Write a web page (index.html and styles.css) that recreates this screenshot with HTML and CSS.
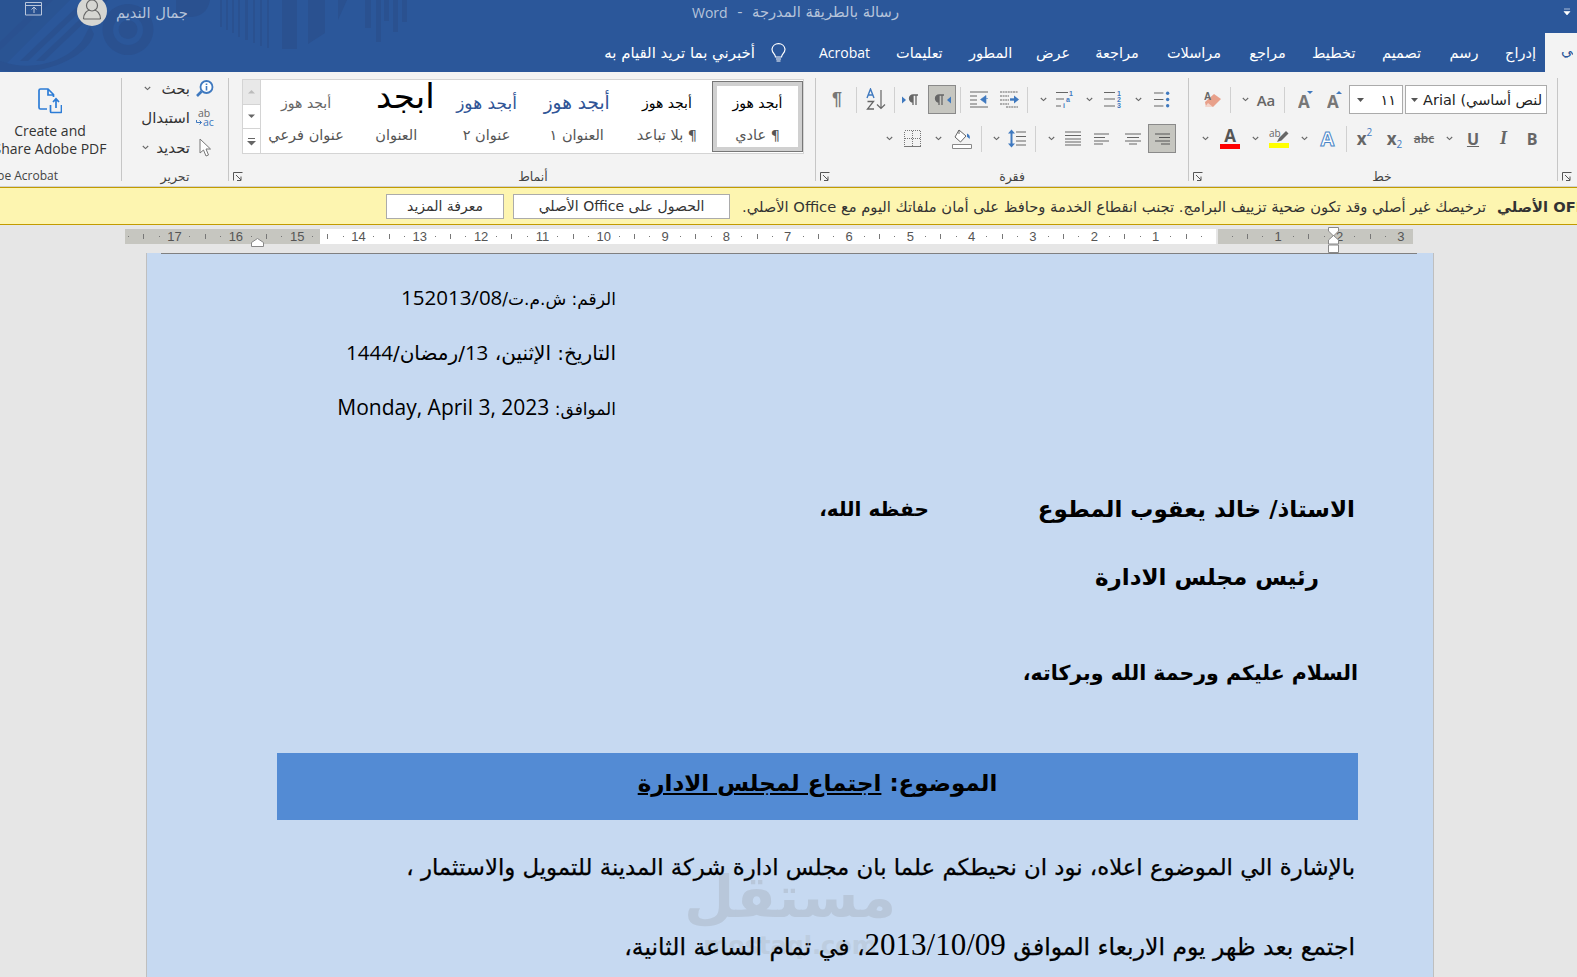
FILE: index.html
```html
<!DOCTYPE html>
<html lang="ar">
<head>
<meta charset="utf-8">
<title>Word</title>
<link rel="stylesheet" href="styles.css">
</head>
<body>
<svg class="defs" width="0" height="0" aria-hidden="true">
  <symbol id="chev" viewBox="0 0 7 5"><path d="M.8 1l2.7 2.600L6.200 1" fill="none" stroke="#666" stroke-width="1.100"/></symbol>
  <symbol id="launch" viewBox="0 0 10 9"><path d="M.5 8.500v-8h9M3 3l5 5M8 4.500v4H4" fill="none" stroke="#555"/></symbol>
</svg>

<div class="app">
  <div class="chrome">
    <svg class="decor" width="420" height="72" viewBox="0 0 420 72" aria-hidden="true">
      <g fill="#2a5190">
        <path d="M0 0h70L0 70z" opacity=".6"/>
        <path d="M20 61L84 0h8L28 61zM36 61L100 0h8L44 61zM0 42L44 0h9L0 50z"/>
        <path d="M0 61c30 11 65 2 82-20l8-15 4 8C88 58 40 78 0 70z"/>
        <path fill-rule="evenodd" d="M128 4a25.500 25.500 0 1 1-.1 0zm0 11a15 15 0 1 0 .1 0z"/>
        <circle cx="128" cy="29.500" r="9.500"/>
        <path d="M176 0h34c-2 12-10 17-20 17h-14z"/>
        <path d="M220 0h2v27h-2zM226 0h2v30h-2zM232 0h2v33h-2zM238 0h2v37h-2zM245 0h3v40h-3zM253 0h2v43h-2zM260 0h2v46h-2zM267 0h2v48h-2zM282 0h15v49h-15zM308 0h17v33l-17 11zM338 0h9l-9 20zM365 0h6v28h-6zM376 0h5v42h-5zM384 0h5v21h-5zM393 0h5v32h-5zM402 0h5v22h-5z"/>
      </g>
    </svg>
    <header class="titlebar">
      <div class="title-left">
        <svg class="ribbon-display" width="18" height="14" viewBox="0 0 18 14" aria-hidden="true"><path d="M.5.500h16v12.500H.5zM.5 3.500h16M9 11V5.500M6.500 7.500L9 5l2.500 2.500" fill="none" stroke="#b9c6db" stroke-width="1"/></svg>
        <div class="avatar"><svg width="30" height="30" viewBox="0 0 30 30" aria-hidden="true"><circle cx="15" cy="9.500" r="5.500" fill="none" stroke="#666" stroke-width="1.200"/><path d="M6.500 23c0-6 4-8.500 6-9M23.500 23c0-6-4-8.500-6-9M6.500 23h17" fill="none" stroke="#666" stroke-width="1.200"/></svg></div>
        <span class="user">جمال النديم</span>
      </div>
      <div class="doc-title"><span dir="ltr">Word</span><span class="dash">-</span><span>رسالة بالطريقة المدرجة</span></div>
      <svg class="qat" width="8" height="8" viewBox="0 0 8 8" aria-hidden="true"><path d="M1 1h6M1 3.500h6L4 7z" fill="#fff" stroke="#fff" stroke-width=".6"/></svg>
    </header>

    <nav class="tabs">
      <span class="tell">أخبرني بما تريد القيام به</span>
      <svg class="bulb" width="17" height="20" viewBox="0 0 17 20" aria-hidden="true"><path d="M5.500 14c0-3-3.500-4-3.500-7.800A6.400 6.400 0 0 1 8.500.7a6.400 6.400 0 0 1 6.500 5.500c0 3.800-3.500 4.800-3.500 7.800zM6 16h5M6.500 18h4" fill="none" stroke="#fff" stroke-width="1.200"/></svg>
      <span class="tab t-acrobat">Acrobat</span>
      <span class="tab t-help">تعليمات</span>
      <span class="tab t-dev">المطور</span>
      <span class="tab t-view">عرض</span>
      <span class="tab t-review">مراجعة</span>
      <span class="tab t-mail">مراسلات</span>
      <span class="tab t-ref">مراجع</span>
      <span class="tab t-layout">تخطيط</span>
      <span class="tab t-design">تصميم</span>
      <span class="tab t-draw">رسم</span>
      <span class="tab t-insert">إدراج</span>
      <span class="tab-active"><span>الرئيسي</span></span>
    </nav>
  </div>

  <section class="ribbon">
    <div class="group g-adobe">
      <div class="adobe-btn">
        <svg width="24" height="26" viewBox="0 0 24 26" aria-hidden="true"><path d="M9 21H2.500A1.500 1.500 0 0 1 1 19.500v-17A1.500 1.500 0 0 1 2.500 1H10l5.500 5.500V9M10 1v6h6M18 20v-9M15 14l3-3.200 3 3.200M12.500 17v6.500a1 1 0 0 0 1 1h9a1 1 0 0 0 1-1V17" fill="none" stroke="#2c7cd6" stroke-width="1.700"/></svg>
        <span class="adobe-text">Create and</span>
        <span class="adobe-text">Share Adobe PDF</span>
      </div>
      <div class="glabel g-adobe-label">Adobe Acrobat</div>
    </div>

    <div class="group g-edit">
      <div class="edit-rows">
        <div class="edit-row r1">
          <svg class="chev" width="7" height="5"><use href="#chev"/></svg>
          <span class="edit-text">بحث</span>
          <span class="edit-ico"><svg width="18" height="18" viewBox="0 0 18 18" aria-hidden="true"><circle cx="10.500" cy="7" r="6" fill="#fff" stroke="#3f79bf" stroke-width="1.800"/><path d="M5.500 11.500L1 16" stroke="#3f79bf" stroke-width="2.600"/><path d="M10.500 3.500v1.500M10.500 6v4.500" stroke="#3f79bf" stroke-width="1.600"/></svg></span>
        </div>
        <div class="edit-row r2">
          <span class="edit-text">استبدال</span>
          <span class="edit-ico abac"><span class="ab">ab</span><span class="ac"><svg width="7" height="7" viewBox="0 0 7 7" aria-hidden="true"><path d="M.5 1v2.500h5M3.500 1.500l2 2-2 2" fill="none" stroke="#3f79bf"/></svg>ac</span></span>
        </div>
        <div class="edit-row r3">
          <svg class="chev" width="7" height="5"><use href="#chev"/></svg>
          <span class="edit-text">تحديد</span>
          <span class="edit-ico"><svg width="12" height="19" viewBox="0 0 12 19" aria-hidden="true"><path d="M1 1v14l3.500-3 2.500 6 2.500-1-2.500-6h4.500z" fill="#fff" stroke="#777"/></svg></span>
        </div>
      </div>
      <div class="glabel">تحرير</div>
    </div>

    <div class="group g-styles">
      <div class="gallery">
        <div class="gal-scroll">
          <div class="gs gs-up"><svg width="7" height="5" viewBox="0 0 7 5"><path d="M0 4.500h7L3.500 1z" fill="#bbb"/></svg></div>
          <div class="gs"><svg width="7" height="5" viewBox="0 0 7 5"><path d="M0 .5h7L3.500 4z" fill="#666"/></svg></div>
          <div class="gs"><svg width="9" height="9" viewBox="0 0 9 9"><path d="M1 1.500h7" stroke="#666"/><path d="M0 4h9L4.500 8.500z" fill="#666"/></svg></div>
        </div>
        <div class="style-item"><span class="sp sp-sub">أبجد هوز</span><span class="sl">عنوان فرعي</span></div>
        <div class="style-item"><span class="sp sp-title">ابجد</span><span class="sl">العنوان</span></div>
        <div class="style-item"><span class="sp sp-h2">أبجد هوز</span><span class="sl">عنوان ٢</span></div>
        <div class="style-item"><span class="sp sp-h1">أبجد هوز</span><span class="sl">العنوان ١</span></div>
        <div class="style-item"><span class="sp">أبجد هوز</span><span class="sl">¶ بلا تباعد</span></div>
        <div class="style-item selected"><span class="sp">أبجد هوز</span><span class="sl">¶ عادي</span></div>
      </div>
      <div class="glabel">أنماط</div>
      <svg class="launcher" width="10" height="9"><use href="#launch"/></svg>
    </div>

    <div class="group g-para">
      <div class="tool-rows">
        <div class="tool-row pr1">
          <span class="slot w24"><span class="pil big">¶</span></span>
          <span class="slot w14"><i class="vsep"></i></span>
          <span class="slot w26"><svg width="20" height="23" viewBox="0 0 20 23" aria-hidden="true"><path d="M1 10L4.500 1 8 10M2.300 7h4.400" fill="none" stroke="#3f79bf" stroke-width="1.400"/><path d="M1.500 13.500h6L1.500 21h6.500" fill="none" stroke="#666" stroke-width="1.300"/><path d="M15 2v18M11 16.500l4 4 4-4" fill="none" stroke="#666" stroke-width="1.200"/></svg></span>
          <span class="slot w10"><i class="vsep"></i></span>
          <span class="slot w24"><svg width="18" height="12" viewBox="0 0 18 12" aria-hidden="true"><path d="M0 2.500l4 3.500-4 3.500z" fill="#3f79bf"/><path d="M11 11V1h5M14 1v10M11 1a3.500 3.500 0 0 0 0 7" fill="none" stroke="#666" stroke-width="1.300"/><path d="M11 1a3.500 3.500 0 0 0 0 7z" fill="#666"/></svg></span>
          <span class="slot w5"></span>
          <span class="slot w28 on"><svg width="20" height="12" viewBox="0 0 20 12" aria-hidden="true"><path d="M7 11V1h5M10 1v10M7 1a3.500 3.500 0 0 0 0 7" fill="none" stroke="#666" stroke-width="1.300"/><path d="M7 1a3.500 3.500 0 0 0 0 7z" fill="#666"/><path d="M19 2.500l-4 3.500 4 3.500z" fill="#3f79bf"/></svg></span>
          <span class="slot w8"><i class="vsep"></i></span>
          <span class="slot w30"><svg width="19" height="17" viewBox="0 0 19 17" aria-hidden="true"><path d="M0 1h18M0 5h7M0 9h7M0 13h7M0 16h18" stroke="#666" stroke-width="1.100"/><path d="M18 7.500h-5M16 4.500l-5.500 4 5.500 4z" fill="#3f79bf" stroke="#3f79bf" stroke-width=".6"/></svg></span>
          <span class="slot w30"><svg width="19" height="17" viewBox="0 0 19 17" aria-hidden="true"><path d="M0 1h18M0 5h9M0 9h9M0 13h9M6 16h12" stroke="#666" stroke-width="1.100" stroke-dasharray="2 .6"/><path d="M10 8.500h4" stroke="#3f79bf" stroke-width="2.400"/><path d="M14 4.500l5 4-5 4z" fill="#3f79bf"/></svg></span>
          <span class="slot w6"><i class="vsep"></i></span>
          <span class="slot w26"><svg width="7" height="5"><use href="#chev"/></svg></span>
          <span class="slot w18"><svg width="18" height="17" viewBox="0 0 18 17" aria-hidden="true"><path d="M0 1.500h12M0 8h8M5 15h-5" stroke="#666" stroke-width="1.100"/><text x="13" y="5" class="mini-b">1</text><text x="10" y="11" class="mini-b">a</text><text x="7" y="17" class="mini-b">i</text></svg></span>
          <span class="slot w30"><svg width="7" height="5"><use href="#chev"/></svg></span>
          <span class="slot w18"><svg width="18" height="17" viewBox="0 0 18 17" aria-hidden="true"><path d="M0 1.500h11M0 8h11M0 15h11" stroke="#666" stroke-width="1.100"/><text x="13" y="5" class="mini-b">1</text><text x="13" y="11" class="mini-b">2</text><text x="13" y="17" class="mini-b">3</text></svg></span>
          <span class="slot w32"><svg width="7" height="5"><use href="#chev"/></svg></span>
          <span class="slot w16"><svg width="17" height="17" viewBox="0 0 17 17" aria-hidden="true"><path d="M0 1.500h10M0 8.500h10M0 15.500h10" stroke="#666" stroke-width="1.100"/><circle cx="14.500" cy="1.800" r="1.800" fill="#3f79bf"/><circle cx="14.500" cy="8.500" r="1.800" fill="#3f79bf"/><circle cx="14.500" cy="15.200" r="1.800" fill="#3f79bf"/></svg></span>
        </div>
        <div class="tool-row pr2">
          <span class="slot w20"><svg width="7" height="5"><use href="#chev"/></svg></span>
          <span class="slot w27"><svg class="crisp" width="17" height="17" viewBox="0 0 17 17" aria-hidden="true"><path d="M.5.500h16v16H.5zM.5 8.500h16M8.500.5v16" fill="none" stroke="#777" stroke-dasharray="1 1"/><path d="M.5 16.500h16" stroke="#777"/></svg></span>
          <span class="slot w24"><svg width="7" height="5"><use href="#chev"/></svg></span>
          <span class="slot w24"><svg width="20" height="20" viewBox="0 0 20 20" aria-hidden="true"><path d="M7 1l7 6-5.500 6L3 8z" fill="#fff" stroke="#666"/><path d="M7 1v4" stroke="#666"/><path d="M15 4.500c2.500 1 3.500 3 2.500 5.500-1-.8-1.500-2-2.500-2z" fill="#3f79bf"/><path d="M.5 15.500h19v4H.5z" fill="#fff" stroke="#888"/></svg></span>
          <span class="slot w14"><i class="vsep"></i></span>
          <span class="slot w16"><svg width="7" height="5"><use href="#chev"/></svg></span>
          <span class="slot w25"><svg width="18" height="19" viewBox="0 0 18 19" aria-hidden="true"><path d="M3.500 3v13" stroke="#3f79bf" stroke-width="2"/><path d="M0 4.500L3.500.5 7 4.500zM0 14.500l3.500 4 3.500-4z" fill="#3f79bf"/><path d="M8 3h10M8 7.500h10M8 12h10M8 16h10" stroke="#666" stroke-width="1.200"/></svg></span>
          <span class="slot w12"><i class="vsep"></i></span>
          <span class="slot w20"><svg width="7" height="5"><use href="#chev"/></svg></span>
          <span class="slot w23"><svg width="16" height="15" viewBox="0 0 16 15" aria-hidden="true"><path d="M0 1h16M0 4.500h16M0 8h16M0 11h16M0 14h16" stroke="#666" stroke-width="1.100"/></svg></span>
          <span class="slot w34"><svg width="15" height="12" viewBox="0 0 15 12" aria-hidden="true"><path d="M0 1h15M0 4.500h11M0 8h15M0 11h9" stroke="#666" stroke-width="1.100"/></svg></span>
          <span class="slot w30"><svg width="16" height="12" viewBox="0 0 16 12" aria-hidden="true"><path d="M0 1h16M2 4.500h12M0 8h16M4 11h8" stroke="#666" stroke-width="1.100"/></svg></span>
          <span class="slot w28 on"><svg width="15" height="12" viewBox="0 0 15 12" aria-hidden="true"><path d="M0 1h15M4 4.500h11M0 8h15M6 11h9" stroke="#555" stroke-width="1.100"/></svg></span>
        </div>
      </div>
      <div class="glabel">فقرة</div>
      <svg class="launcher" width="10" height="9"><use href="#launch"/></svg>
    </div>

    <div class="group g-font">
      <div class="tool-rows">
        <div class="tool-row fr1">
          <span class="slot w25"><svg width="18" height="19" viewBox="0 0 18 19" aria-hidden="true"><path d="M2 17l-1-5 9-8 7 5-8 8z" fill="#e8a08a"/><path d="M1 17l3-4 5 4z" fill="#f4d5cb"/><text x="0" y="10" class="mini-a">A</text></svg></span>
          <span class="slot w10"><i class="vsep"></i></span>
          <span class="slot w20"><svg width="7" height="5"><use href="#chev"/></svg></span>
          <span class="slot w22 aa">Aa</span>
          <span class="slot w14"><i class="vsep"></i></span>
          <span class="slot w28"><svg width="15" height="19" viewBox="0 0 15 19" aria-hidden="true"><text x="0" y="18" class="grow">A</text><path d="M9 1h6l-3 3z" fill="#3f79bf"/></svg></span>
          <span class="slot w30"><svg width="15" height="19" viewBox="0 0 15 19" aria-hidden="true"><text x="0" y="18" class="grow">A</text><path d="M9 4h6l-3-3z" fill="#3f79bf"/></svg></span>
          <span class="combo c-size"><svg class="caret" width="7" height="4" viewBox="0 0 7 4"><path d="M0 0h7L3.500 4z" fill="#555"/></svg><span class="combo-text">١١</span></span>
          <span class="combo c-font"><svg class="caret" width="7" height="4" viewBox="0 0 7 4"><path d="M0 0h7L3.500 4z" fill="#555"/></svg><span class="combo-text" dir="rtl">لنص أساسي) Arial</span></span>
        </div>
        <div class="tool-row fr2">
          <span class="slot w21"><svg width="7" height="5"><use href="#chev"/></svg></span>
          <span class="slot w28 colora"><span class="ca">A</span><i class="cb red"></i></span>
          <span class="slot w22"><svg width="7" height="5"><use href="#chev"/></svg></span>
          <span class="slot w26 colora"><svg width="20" height="14" viewBox="0 0 20 14" aria-hidden="true"><text x="0" y="8" class="mini-ab">ab</text><path d="M8 13l2-4 7-7 2.500 2.500-7 7z" fill="#666"/></svg><i class="cb yellow"></i></span>
          <span class="slot w24"><svg width="7" height="5"><use href="#chev"/></svg></span>
          <span class="slot w23"><span class="fx">A</span></span>
          <span class="slot w14"><i class="vsep"></i></span>
          <span class="slot w23 fmt"><b>x</b><sup>2</sup></span>
          <span class="slot w37 fmt"><b>x</b><sub>2</sub></span>
          <span class="slot w22 abc">abc</span>
          <span class="slot w28"><svg width="7" height="5"><use href="#chev"/></svg></span>
          <span class="slot w20 bt u">U</span>
          <span class="slot w41 bt it">I</span>
          <span class="slot w16 bt">B</span>
        </div>
      </div>
      <div class="glabel">خط</div>
      <svg class="launcher" width="10" height="9"><use href="#launch"/></svg>
    </div>

    <div class="group g-next"><svg class="launcher" width="10" height="9"><use href="#launch"/></svg></div>
  </section>

  <section class="msgbar">
    <button class="msg-btn b-more" dir="rtl">معرفة المزيد</button>
    <button class="msg-btn b-get" dir="rtl">الحصول على Office الأصلي</button>
    <span class="msg-text">ترخيصك غير أصلي وقد تكون ضحية تزييف البرامج. تجنب انقطاع الخدمة وحافظ على أمان ملفاتك اليوم مع Office الأصلي.</span>
    <b class="msg-head" dir="rtl">OFFICE الأصلي</b>
  </section>

  <div class="ruler-zone">
    <div class="ruler">
      <div class="rc"><i class="dot"></i><i class="tick"></i><i class="dot"></i><span>17</span></div>
      <div class="rc"><i class="dot"></i><i class="tick"></i><i class="dot"></i><span>16</span></div>
      <div class="rc"><i class="dot"></i><i class="tick"></i><i class="dot"></i><span>15</span></div>
      <div class="rc"><i class="dot"></i><i class="tick"></i><i class="dot"></i><span>14</span></div>
      <div class="rc"><i class="dot"></i><i class="tick"></i><i class="dot"></i><span>13</span></div>
      <div class="rc"><i class="dot"></i><i class="tick"></i><i class="dot"></i><span>12</span></div>
      <div class="rc"><i class="dot"></i><i class="tick"></i><i class="dot"></i><span>11</span></div>
      <div class="rc"><i class="dot"></i><i class="tick"></i><i class="dot"></i><span>10</span></div>
      <div class="rc"><i class="dot"></i><i class="tick"></i><i class="dot"></i><span>9</span></div>
      <div class="rc"><i class="dot"></i><i class="tick"></i><i class="dot"></i><span>8</span></div>
      <div class="rc"><i class="dot"></i><i class="tick"></i><i class="dot"></i><span>7</span></div>
      <div class="rc"><i class="dot"></i><i class="tick"></i><i class="dot"></i><span>6</span></div>
      <div class="rc"><i class="dot"></i><i class="tick"></i><i class="dot"></i><span>5</span></div>
      <div class="rc"><i class="dot"></i><i class="tick"></i><i class="dot"></i><span>4</span></div>
      <div class="rc"><i class="dot"></i><i class="tick"></i><i class="dot"></i><span>3</span></div>
      <div class="rc"><i class="dot"></i><i class="tick"></i><i class="dot"></i><span>2</span></div>
      <div class="rc"><i class="dot"></i><i class="tick"></i><i class="dot"></i><span>1</span></div>
      <div class="rc"><i class="dot"></i><i class="tick"></i><i class="dot"></i><span></span></div>
      <div class="rc"><i class="dot"></i><i class="tick"></i><i class="dot"></i><span>1</span></div>
      <div class="rc"><i class="dot"></i><i class="tick"></i><i class="dot"></i><span>2</span></div>
      <div class="rc"><i class="dot"></i><i class="tick"></i><i class="dot"></i><span>3</span></div>
    </div>
    <svg class="marker-left" width="13" height="9" viewBox="0 0 13 9" aria-hidden="true"><path d="M.5 8.500V4.500l6-4 6 4v4z" fill="#fff" stroke="#888"/></svg>
    <svg class="marker-right" width="11" height="27" viewBox="0 0 11 27" aria-hidden="true"><path d="M.5.500h10v3.500l-5 5-5-5zM.5 17V13l5-4.500 5 4.500v4zM.5 18h10v7.500H.5z" fill="#fff" stroke="#888"/></svg>
  </div>

  <main class="workspace">
    <article class="page">
      <div class="page-rule"></div>
      <div class="meta">
        <p class="meta-line">الرقم: ش.م.ت/<span>152013/08</span></p>
        <p class="meta-line meta-wide">التاريخ: الإثنين، <span>13</span>/رمضان/<span>1444</span></p>
        <p class="meta-line">الموافق: <span class="meta-date" dir="ltr">Monday, April 3, 2023</span></p>
      </div>
      <p class="addr addr1"><span>الاستاذ/ خالد يعقوب المطوع</span><span class="hafiz">حفظه الله،</span></p>
      <p class="addr addr2">رئيس مجلس الادارة</p>
      <p class="salam">السلام عليكم ورحمة الله وبركاته،</p>
      <div class="subject"><span>الموضوع: <u>اجتماع لمجلس الادارة</u></span></div>
      <p class="body-line l1">بالإشارة الي الموضوع اعلاه، نود ان نحيطكم علما بان مجلس ادارة شركة المدينة للتمويل والاستثمار ،</p>
      <p class="body-line l2">اجتمع بعد ظهر يوم الاربعاء الموافق <span class="tnum">2013/10/09</span>، في تمام الساعة الثانية،</p>
      <div class="watermark"><span class="wm-ar">مستقل</span><span class="wm-en">mostaql.com</span></div>
    </article>
  </main>
</div>
</body>
</html>
```

FILE: styles.css
```css
* { box-sizing: border-box; }
html, body { margin: 0; height: 100%; overflow: hidden; }
body { font-family: "DejaVu Sans", "Open Sans", sans-serif; background: #e6e6e6; color: #333; }
p { margin: 0; }
.defs { position: absolute; }
.crisp { shape-rendering: crispEdges; }
.app { width: 1577px; height: 977px; overflow: hidden; display: flex; flex-direction: column; }

/* window chrome: title bar + tab strip share one backdrop */
.chrome { position: relative; flex: none; background: #2b579a; }
.decor { position: absolute; left: 0; top: 0; }
.titlebar { position: relative; height: 33px; display: flex; align-items: flex-start; }
.title-left { display: flex; align-items: flex-start; padding-left: 25px; }
.ribbon-display { margin-top: 2px; }
.avatar { width: 30px; height: 30px; margin: -4px 0 0 34px; border-radius: 50%; background: #d6d6d2; overflow: hidden; flex: none; }
.user { margin: 4px 0 0 9px; font-size: 14.700px; color: #b6c4da; white-space: nowrap; }
.doc-title { position: absolute; left: 692px; top: 3px; width: 207px; display: flex; justify-content: space-between; font-size: 14.700px; color: #b6c4da; white-space: nowrap; }
.doc-title span:first-child { font-family: "Open Sans", sans-serif; font-size: 14px; }
.qat { position: absolute; right: 6px; top: 8px; }

/* tabs */
.tabs { position: relative; height: 39px; display: flex; align-items: center; padding-left: 605px; color: #fff; font-size: 14.500px; white-space: nowrap; }
.tell { width: 150px; flex: none; font-size: 15px; direction: rtl; }
.bulb { flex: none; margin-left: 15px; margin-right: 32px; }
.tab { text-align: center; flex: none; }
.t-acrobat { width: 50px; font-family: "Open Sans", sans-serif; font-size: 14px; margin-right: 27px; }
.t-help { width: 46px; margin-right: 27px; }
.t-dev { width: 39px; margin-right: 28px; }
.t-view { width: 32px; margin-right: 27px; }
.t-review { width: 44px; margin-right: 27px; }
.t-mail { width: 56px; margin-right: 27px; }
.t-ref { width: 37px; margin-right: 26px; }
.t-layout { width: 42px; margin-right: 27px; }
.t-design { width: 41px; margin-right: 27px; }
.t-draw { width: 30px; margin-right: 26px; }
.t-insert { width: 31px; margin-right: 9px; }
.tab-active { align-self: stretch; width: 32px; flex: none; background: #f3f3f3; color: #2b579a; padding-left: 16px; padding-top: 9px; overflow: hidden; }
.tab-active span { display: block; width: 12px; overflow: hidden; }

/* ribbon */
.ribbon { height: 115px; flex: none; background: #f3f3f3; border-bottom: 1px solid #d0d0d0; display: flex; font-size: 12px; }
.group { position: relative; flex: none; height: 103px; margin-top: 6px; border-right: 1px solid #c6c6c6; display: flex; flex-direction: column; }
.glabel { position: absolute; left: 0; right: 0; top: 91px; text-align: center; font-size: 12.500px; color: #444; white-space: nowrap; }
.launcher { position: absolute; left: 4px; top: 94px; }
.g-adobe { width: 122px; }
.adobe-btn { display: flex; flex-direction: column; align-items: center; padding-top: 10px; width: 112px; margin-left: -6px; }
.adobe-btn svg { margin-bottom: 8px; }
.adobe-text { font-family: "Open Sans", sans-serif; font-size: 14px; line-height: 18px; color: #333; white-space: nowrap; }
.g-adobe-label { left: -60px; right: 63px; text-align: right; font-family: "Open Sans", sans-serif; font-size: 12px; top: 89px; }
.g-edit { width: 107px; }
.edit-rows { display: flex; flex-direction: column; margin-top: -4px; }
.edit-row { height: 29.500px; display: flex; align-items: center; justify-content: flex-end; padding-right: 14px; gap: 6px; }
.edit-text { font-size: 15px; color: #333; white-space: nowrap; }
.edit-ico { width: 18px; flex: none; display: flex; justify-content: center; }
.r1 .chev { margin-right: 4px; }
.r3 .chev { margin-right: 1px; }
.abac { flex-direction: column; font-family: "Open Sans", sans-serif; font-size: 10.500px; line-height: 9px; color: #666; }
.ab { padding-left: 2px; }
.ac { color: #3f79bf; display: flex; align-items: center; }
.g-styles { width: 587px; padding: 1px 0 0 13px; }
.g-styles .glabel { padding-left: 22px; }
.gallery { width: 562px; height: 75px; background: #fff; border: 1px solid #d4d4d4; display: flex; }
.gal-scroll { width: 18px; flex: none; display: flex; flex-direction: column; border-right: 1px solid #d4d4d4; }
.gs { flex: 1; display: flex; align-items: center; justify-content: center; border-bottom: 1px solid #d4d4d4; }
.gs:last-child { border-bottom: 0; }
.gs-up { background: #e8e8e8; }
.style-item { flex: 1; display: flex; flex-direction: column; align-items: center; padding-top: 12px; min-width: 0; white-space: nowrap; }
.style-item .sp { height: 34px; font-size: 14px; line-height: 22px; color: #000; direction: rtl; }
.style-item .sl { font-size: 14.500px; line-height: 18px; color: #555; direction: rtl; }
.style-item .sp-sub { color: #666; }
.style-item .sp-h1 { color: #2f5496; font-size: 18.500px; }
.style-item .sp-h2 { color: #2f5496; font-size: 17px; }
.style-item .sp-title { font-size: 34px; margin: -14px 0 0 18px; height: 48px; line-height: 36px; }
.selected { flex: none; width: 91px; margin: 1px 0; border: 1px solid #777; box-shadow: inset 0 0 0 4px #d0d0d0; padding-top: 10px; }
.g-para { width: 373px; }
.g-para .glabel { padding-left: 20px; }
.g-font { width: 369px; }
.g-font .glabel { padding-left: 18px; }
.g-next { flex: 1; border-right: 0; }
.tool-rows { display: flex; flex-direction: column; gap: 10px; padding-top: 7px; }
.tool-row { display: flex; height: 29px; align-items: center; }
.pr1 { padding-left: 9px; }
.pr2 { padding-left: 63px; }
.fr1 { padding-left: 11px; }
.fr2 { padding-left: 6px; }
.slot { display: flex; align-items: center; justify-content: center; height: 29px; flex: none; position: relative; }
.w5 { width: 5px; } .w6 { width: 6px; } .w8 { width: 8px; } .w10 { width: 10px; }
.w12 { width: 12px; } .w14 { width: 14px; } .w16 { width: 16px; } .w18 { width: 18px; }
.w20 { width: 20px; } .w21 { width: 21px; } .w22 { width: 22px; } .w23 { width: 23px; }
.w24 { width: 24px; } .w25 { width: 25px; } .w26 { width: 26px; } .w27 { width: 27px; }
.w28 { width: 28px; } .w30 { width: 30px; } .w32 { width: 32px; } .w34 { width: 34px; }
.w37 { width: 37px; } .w41 { width: 41px; }
.vsep { display: block; width: 1px; height: 26px; background: #d0d0d0; }
.on { background: #c6c6c0; border: 1px solid #8a8a8a; }
.pil { font-family: "Liberation Sans", sans-serif; color: #777; }
.big { font-size: 18px; font-weight: 700; }
.mini-b { font: 700 7px "Liberation Sans", sans-serif; fill: #3f79bf; }
.mini-a { font: 700 10px "Liberation Sans", sans-serif; fill: #666; }
.mini-ab { font: 400 10px "Open Sans", sans-serif; fill: #666; }
.grow { font: 700 17px "Open Sans", sans-serif; fill: #777; }
.aa { font: 600 15px "Open Sans", sans-serif; color: #666; }
.combo { height: 29px; background: #fff; border: 1px solid #ababab; display: flex; align-items: center; flex: none; overflow: hidden; }
.c-size { width: 54px; padding-left: 7px; justify-content: space-between; padding-right: 6px; }
.c-font { width: 142px; margin-left: 2px; padding-left: 5px; gap: 5px; }
.caret { flex: none; }
.combo-text { font-size: 14.500px; color: #222; white-space: nowrap; }
.colora { flex-direction: column; }
.ca { font: 700 17px/16px "Open Sans", sans-serif; color: #555; }
.cb { display: block; width: 20px; height: 5px; }
.red { background: #f00; }
.yellow { background: #ff0; }
.fx { font: 700 20px "Open Sans", sans-serif; color: #fff; -webkit-text-stroke: 1px #4a86c8; }
.fmt { font-family: "Open Sans", sans-serif; color: #666; font-size: 17px; }
.fmt b { line-height: 1; }
.fmt sup { font-size: 10px; color: #3f79bf; align-self: flex-start; margin-top: 3px; line-height: 1; }
.fmt sub { font-size: 10px; color: #3f79bf; align-self: flex-end; margin-bottom: 4px; line-height: 1; }
.abc { font: 600 12px "Open Sans", sans-serif; color: #666; text-decoration: line-through; }
.bt { font: 700 16px "Open Sans", sans-serif; color: #666; }
.u { text-decoration: underline; }
.it { font-style: italic; font-family: "Liberation Serif", serif; font-size: 18px; }

/* message bar */
.msgbar { height: 38px; flex: none; background: #fdf5b0; border-top: 1px solid #c29b00; border-bottom: 1px solid #c29b00; display: flex; align-items: center; padding-left: 386px; white-space: nowrap; font-size: 14.700px; color: #333; }
.msg-btn { height: 25px; flex: none; background: #fff; border: 1px solid #ababab; font: inherit; font-size: 14px; color: #333; padding: 0; }
.b-more { width: 118px; margin-right: 9px; }
.b-get { width: 217px; margin-right: 13px; }
.msg-text { width: 743px; flex: none; direction: rtl; }
.msg-head { margin-left: 11px; flex: none; }

/* ruler */
.ruler-zone { position: relative; height: 28px; flex: none; background: #e6e6e6; padding: 4px 0 0 125px; }
.ruler { width: 1288px; height: 15px; display: flex; overflow: hidden; background: linear-gradient(90deg, #c6c6c0 0, #c6c6c0 195px, #fff 195px, #fff 1091px, #e6e6e6 1091px, #e6e6e6 1093px, #c6c6c0 1093px); }
.rc { flex: none; width: 61.320px; display: flex; align-items: center; font: 13px/15px "Liberation Sans Narrow", "Liberation Sans", sans-serif; color: #555; }
.rc:first-child { margin-left: -4.100px; }
.rc > * { flex: none; width: 15.330px; text-align: center; }
.dot, .tick { display: flex; justify-content: center; }
.dot::before { content: ""; width: 1px; height: 1px; background: #777; }
.tick::before { content: ""; width: 1px; height: 5px; background: #777; }
.marker-left { position: absolute; left: 251px; top: 13px; }
.marker-right { position: absolute; left: 1328px; top: 2px; }

/* page */
.workspace { flex: 1; min-height: 0; padding-left: 146px; position: relative; }
.page { position: relative; width: 1288px; height: 100%; background: #c6d9f1; border-left: 1px solid #bfbfbf; border-right: 1px solid #bfbfbf; direction: rtl; color: #000; overflow: hidden; }
.page-rule { position: absolute; top: 0; left: 14px; right: 16px; height: 1px; background: #808080; }
.meta { padding-top: 28px; margin-right: 817px; }
.meta-line { height: 55px; font-size: 17px; line-height: 32px; white-space: nowrap; }
.meta-wide { font-size: 20px; }
.meta-line span { font-family: "Open Sans", sans-serif; font-size: 20.500px; }
.meta-line .meta-date { font-size: 21px; }
.addr { font-weight: 700; font-size: 23px; white-space: nowrap; }
.addr1 { margin: 46px 78px 0 0; height: 68px; line-height: 34px; display: flex; gap: 109px; }
.hafiz { font-size: 20px; }
.addr2 { margin-right: 114px; height: 98px; line-height: 34px; }
.salam { font-weight: 700; font-size: 20.500px; margin-right: 75px; line-height: 30px; height: 95px; white-space: nowrap; }
.subject { margin: 0 75px 0 130px; height: 67px; background: #538bd4; display: flex; justify-content: center; font-weight: 700; font-size: 23px; line-height: 60px; }
.body-line { position: relative; z-index: 1; margin-right: 78px; line-height: 40px; white-space: nowrap; -webkit-text-stroke: .25px #000; }
.l1 { margin-top: 27px; height: 78px; font-size: 22.800px; }
.l2 { height: 80px; font-size: 23.500px; }
.tnum { font-family: "Liberation Serif", serif; font-size: 31px; -webkit-text-stroke: 0; }
.watermark { position: absolute; left: 547px; top: 613px; width: 192px; direction: ltr; display: flex; flex-direction: column; align-items: center; color: #b8c7da; }
.wm-ar { font-weight: 700; font-size: 58px; line-height: 62px; direction: rtl; margin-bottom: 5px; }
.wm-en { font-weight: 700; font-size: 24px; line-height: 26px; color: #bdcde0; }
```
